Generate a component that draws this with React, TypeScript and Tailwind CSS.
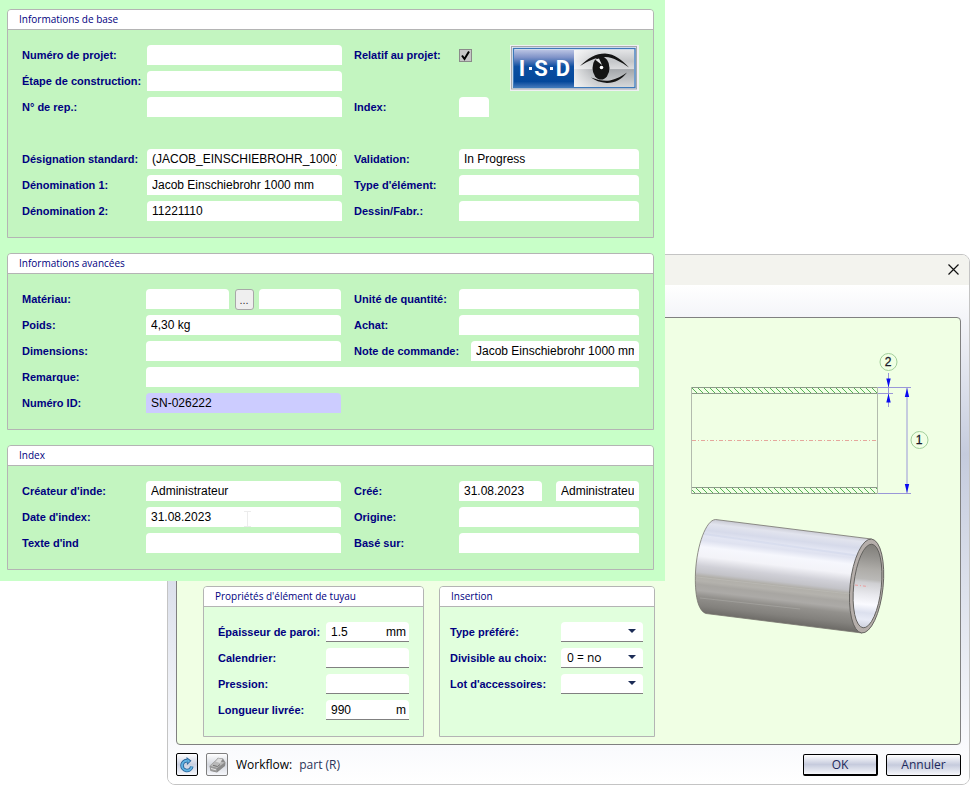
import type { ReactNode } from "react";
import clsx from "clsx";

const FIELD =
  "h-5 min-w-0 rounded-t-[4px] bg-white px-[5px] text-[12px] leading-5 text-black outline-none";
const LABEL =
  "shrink-0 text-[11px] font-bold leading-5 whitespace-nowrap text-[#000080]";

function GroupBox({
  title,
  className,
  children,
}: {
  title: string;
  className?: string;
  children: ReactNode;
}) {
  return (
    <section
      className={clsx("rounded-t-[4px] border border-[#b4b4b4]", className)}
    >
      <h2 className="h-5 rounded-t-[3px] border-b border-[#b4b4b4] bg-white pl-[11px] font-['Open_Sans',sans-serif] text-[10px] leading-[19px] text-[#000080]">
        {title}
      </h2>
      {children}
    </section>
  );
}

function Field({
  id,
  label,
  value = "",
  labelClass = "w-[124px]",
  fieldClass = "bg-white",
}: {
  id: string;
  label: string;
  value?: string;
  labelClass?: string;
  fieldClass?: string;
}) {
  return (
    <div className="flex h-5">
      <label htmlFor={id} className={clsx(LABEL, labelClass)}>
        {label}
      </label>
      <input
        id={id}
        type="text"
        defaultValue={value}
        className={clsx(FIELD, "flex-1", fieldClass)}
      />
    </div>
  );
}

function UnitField({
  id,
  label,
  value = "",
  unit,
}: {
  id: string;
  label: string;
  value?: string;
  unit?: string;
}) {
  return (
    <div className="flex h-5">
      <label htmlFor={id} className={clsx(LABEL, "w-[108px]")}>
        {label}
      </label>
      <div className="flex min-w-0 flex-1 rounded-t-[4px] border-b border-[#808080] bg-white pr-[3px] pl-[5px] text-[12px] leading-5">
        <input
          id={id}
          type="text"
          defaultValue={value}
          className="w-0 min-w-0 flex-1 bg-transparent text-black outline-none"
        />
        {unit && <span>{unit}</span>}
      </div>
    </div>
  );
}

function SelectField({
  id,
  label,
  options,
}: {
  id: string;
  label: string;
  options: string[];
}) {
  return (
    <div className="flex h-5">
      <label htmlFor={id} className={clsx(LABEL, "w-[111px]")}>
        {label}
      </label>
      <div className="relative min-w-0 flex-1">
        <select
          id={id}
          className="block h-5 w-full appearance-none rounded-t-[4px] border-b border-[#808080] bg-white pl-[6px] font-['Open_Sans',sans-serif] text-[12px] leading-[18px] text-black outline-none"
        >
          {options.map((option) => (
            <option key={option}>{option}</option>
          ))}
        </select>
        <svg
          aria-hidden="true"
          viewBox="0 0 8 4"
          className="pointer-events-none absolute top-[7px] right-[7px] h-1 w-2"
        >
          <path d="M0 0H8L4 4Z" fill="#1c2c56" />
        </svg>
      </div>
    </div>
  );
}

function Logo() {
  return (
    <svg
      role="img"
      aria-label="ISD"
      viewBox="0 0 129 46"
      className="ml-auto h-[46px] w-[129px] shrink-0"
    >
      <defs>
        <linearGradient id="logo-blue" x1="0" y1="0" x2="0" y2="1">
          <stop offset="0" stopColor="#b9c3e3" />
          <stop offset="0.2" stopColor="#7f93c8" />
          <stop offset="0.45" stopColor="#0c4ea0" />
          <stop offset="0.85" stopColor="#04489b" />
          <stop offset="1" stopColor="#3f74b8" />
        </linearGradient>
        <linearGradient id="logo-grey" x1="0" y1="0" x2="0" y2="1">
          <stop offset="0" stopColor="#e3e4e6" />
          <stop offset="0.3" stopColor="#c4c6c9" />
          <stop offset="0.5" stopColor="#d9dadc" />
          <stop offset="0.53" stopColor="#a4a7ab" />
          <stop offset="1" stopColor="#d5d7d9" />
        </linearGradient>
        <linearGradient id="logo-shine" x1="0" y1="0" x2="1" y2="0">
          <stop offset="0" stopColor="#ffffff" stopOpacity="0.7" />
          <stop offset="0.4" stopColor="#ffffff" stopOpacity="0" />
        </linearGradient>
      </defs>
      <rect width="129" height="46" fill="#efeff3" />
      <rect x="1.5" y="1.5" width="125" height="42.5" fill="#f1f2f6" stroke="#a6a8ac" />
      <rect x="3.5" y="3.5" width="121.5" height="39" fill="none" stroke="#3c79ba" strokeWidth="1.4" />
      <rect x="4" y="5" width="60" height="37" fill="url(#logo-blue)" />
      <rect x="64" y="5" width="60" height="37" fill="url(#logo-grey)" />
      <rect x="64" y="5" width="60" height="37" fill="url(#logo-shine)" />
      <g
        fill="#ffffff"
        fontFamily="Roboto, 'Liberation Sans', sans-serif"
        fontSize="22"
        fontWeight="700"
        textAnchor="middle"
      >
        <text x="12" y="31">I</text>
        <text x="31" y="31">S</text>
        <text x="53" y="31">D</text>
      </g>
      <rect x="19" y="22" width="3" height="3" fill="#fff" />
      <rect x="40" y="22" width="3" height="3" fill="#fff" />
      <path
        d="M70 21C78 13 86 8.500 95 8.500C105 9 112 15 119 22.500C111 17 104 12.500 95 12C86 12 78 16 70 21Z"
        fill="#141414"
      />
      <path
        d="M81 32.500C88 35 94 36.500 100 35.500C107 34 112 31 117 27.500C112 34 105 38 97 38C90 37.500 85 35.500 81 32.500Z"
        fill="#141414"
      />
      <ellipse cx="91" cy="23" rx="8.500" ry="11.500" fill="#141414" />
      <path d="M85 14.500L89 13.500L92 20Z" fill="#e8e8ea" />
      <circle cx="91.500" cy="22.500" r="1.800" fill="#fff" />
    </svg>
  );
}

function PipeDrawing() {
  return (
    <svg
      role="img"
      aria-label="1 2"
      viewBox="680 345 260 300"
      className="mt-[27px] ml-[10px] h-[300px] w-[260px] shrink-0 self-start"
    >
      <defs>
        <pattern id="hatch" width="6" height="6" patternUnits="userSpaceOnUse" x="692" y="388">
          <path d="M0 0L6 6" stroke="#55b455" strokeWidth="1" />
        </pattern>
        <linearGradient id="pipe-body" gradientUnits="userSpaceOnUse" x1="794" y1="529" x2="783" y2="623">
          <stop offset="0" stopColor="#c9cad3" />
          <stop offset="0.05" stopColor="#e2e4ee" />
          <stop offset="0.12" stopColor="#d6daea" />
          <stop offset="0.18" stopColor="#e3e6f3" />
          <stop offset="0.23" stopColor="#dfe2f0" />
          <stop offset="0.3" stopColor="#f6f7fd" />
          <stop offset="0.4" stopColor="#f3f3f8" />
          <stop offset="0.5" stopColor="#d0d0d7" />
          <stop offset="0.57" stopColor="#c3c3c8" />
          <stop offset="0.61" stopColor="#b1afa9" />
          <stop offset="0.66" stopColor="#b4b2ad" />
          <stop offset="0.7" stopColor="#a8a6a2" />
          <stop offset="0.76" stopColor="#acaaa7" />
          <stop offset="0.82" stopColor="#93918d" />
          <stop offset="0.92" stopColor="#83817d" />
          <stop offset="1" stopColor="#6e6c68" />
        </linearGradient>
        <linearGradient id="pipe-inside" x1="0" y1="0" x2="0" y2="1">
          <stop offset="0" stopColor="#807e79" />
          <stop offset="0.15" stopColor="#94928e" />
          <stop offset="0.3" stopColor="#aeaca8" />
          <stop offset="0.42" stopColor="#bab9b7" />
          <stop offset="0.46" stopColor="#cfcfd2" />
          <stop offset="0.6" stopColor="#e8e8ed" />
          <stop offset="0.72" stopColor="#fafaff" />
          <stop offset="0.82" stopColor="#dce0ee" />
          <stop offset="0.9" stopColor="#e8ebf6" />
          <stop offset="1" stopColor="#cdd0dc" />
        </linearGradient>
      </defs>

      {/* section view */}
      <rect x="692" y="387.500" width="186" height="6" fill="url(#hatch)" />
      <rect x="692" y="487.500" width="186" height="6" fill="url(#hatch)" />
      <g fill="none" stroke="#8d9b8a">
        <path d="M691.500 387.500H878M691.500 393.500H878M691.500 487.500H878M691.500 493.500H878" />
        <path d="M691.500 387V494M877.500 387V494" stroke="#b3bbae" />
      </g>
      <path
        d="M692 440.500H878"
        stroke="#e5a79c"
        strokeDasharray="4 2 1 2"
        fill="none"
      />

      {/* dimensions */}
      <path
        d="M878 387.500H911M878 393.500H893M878 493.500H911M888.500 373V407M907 388V493"
        stroke="#9a97d8"
        fill="none"
      />
      <path
        d="M886.300 378.500H890.700L888.500 387.500ZM886.300 402.500H890.700L888.500 393.500ZM904.800 397H909.200L907 388ZM904.800 484H909.200L907 493Z"
        fill="#0a0af0"
      />
      <g fill="#f0ffe4" stroke="#a2cf9b">
        <circle cx="888.500" cy="362" r="8.500" />
        <circle cx="919.500" cy="440" r="8.500" />
      </g>
      <g
        fill="#1a1a2a"
        stroke="#1a1a2a"
        strokeWidth="0.3"
        fontFamily="'Liberation Sans', sans-serif"
        fontSize="12"
        textAnchor="middle"
      >
        <text x="888" y="366">2</text>
        <text x="919" y="444">1</text>
      </g>

      {/* shaded pipe */}
      <path
        d="M715.500 519.500L871.500 539L862 633L706 613.500C698 611 694.500 595 695.500 572C697 545 706 520 715.500 519.500Z"
        fill="url(#pipe-body)"
        stroke="#77756f"
        strokeWidth="0.800"
      />
      <path d="M704 534L860 556" stroke="#cbd1e8" strokeOpacity="0.4" strokeWidth="2" />
      <path d="M697 577L850 594M700 598L800 609" stroke="#d0cfcc" strokeOpacity="0.25" />
      <ellipse
        cx="866.600"
        cy="586"
        rx="16.500"
        ry="47.200"
        transform="rotate(6 866.600 586)"
        fill="#b5aeaa"
        stroke="#5f5d5a"
        strokeWidth="0.900"
      />
      <ellipse
        cx="867.500"
        cy="586"
        rx="13.800"
        ry="42"
        transform="rotate(6 867.500 586)"
        fill="url(#pipe-inside)"
        stroke="#5f5d5a"
        strokeWidth="0.900"
      />
      <path d="M855 585L868 586.500" stroke="#ec9c9c" strokeDasharray="3 2 1 2" />
    </svg>
  );
}

const FOOTER_BUTTON =
  "h-[22px] w-[75px] rounded-[2px] border border-black bg-linear-to-b from-white via-[#c6cbdd] to-[#f6f7fb] text-[12px] leading-5 text-[#1d2a5c]";

function PartDialog() {
  return (
    <div className="mt-[254px] ml-[167px] overflow-hidden rounded-lg border border-[#c4c4c4] bg-white [grid-area:1/1]">
      <div className="flex h-[30px] items-center justify-end bg-[#f3f3ee] pr-[9px] pb-[2px]">
        <button type="button" aria-label="Fermer" className="p-[1px]">
          <svg viewBox="0 0 11 11" className="size-[11px]">
            <path d="M0.500 0.500L10.500 10.500M10.500 0.500L0.500 10.500" stroke="#111" strokeWidth="1.200" />
          </svg>
        </button>
      </div>
      <div className="bg-[linear-gradient(#ffffff_0%,#f3f4f8_7%,#c5cbdd_34%,#dde1ec_61%,#f8f9fc_91%,#ffffff_100%)] px-2 pt-8 pb-2">
        <div className="flex min-h-[428px] items-end gap-[15px] rounded-[4px] border border-[#808080] bg-[#f0ffe4] pb-[7px] pl-[26px]">
          <div className="flex items-stretch gap-[15px]">
            <GroupBox
              title="Propriétés d'élément de tuyau"
              className="w-[221px] bg-[#e1ffdd]"
            >
              <div className="flex flex-col gap-[6px] px-[14px] pt-[15px] pb-4">
                <UnitField id="wall" label="Épaisseur de paroi:" value="1.5" unit="mm" />
                <UnitField id="schedule" label="Calendrier:" />
                <UnitField id="pressure" label="Pression:" />
                <UnitField id="length" label="Longueur livrée:" value="990" unit="m" />
              </div>
            </GroupBox>
            <GroupBox title="Insertion" className="w-[216px] bg-[#e1ffdd]">
              <div className="flex flex-col gap-[6px] pt-[15px] pr-[11px] pb-4 pl-[10px]">
                <SelectField id="preferred" label="Type préféré:" options={[""]} />
                <SelectField id="divisible" label="Divisible au choix:" options={["0 = no"]} />
                <SelectField id="accessories" label="Lot d'accessoires:" options={[""]} />
              </div>
            </GroupBox>
          </div>
          <PipeDrawing />
        </div>
        <div className="flex items-center pt-2 font-['Open_Sans',sans-serif]">
          <button
            type="button"
            aria-label="Actualiser"
            className="grid h-[23px] w-[22px] place-items-center rounded-[2px] border border-black bg-linear-to-b from-white via-[#c9d0e0] to-[#f6f7fb]"
          >
            <svg viewBox="0 0 14 16" className="h-4 w-[14px]" fill="none">
              <path d="M7.500 3.700A4.900 4.900 0 1 0 11.800 9.500" stroke="#27639a" strokeWidth="3.600" />
              <path d="M6.500 0L11.500 3.800L7 8Z" fill="#27639a" />
              <path d="M7.500 3.700A4.900 4.900 0 1 0 11.800 9.500" stroke="#5fb2e2" strokeWidth="2" />
              <path d="M7.300 1.700L10.200 3.900L7.600 6.300Z" fill="#5fb2e2" />
            </svg>
          </button>
          <button
            type="button"
            aria-label="Imprimer"
            className="ml-2 grid h-[23px] w-[22px] place-items-center rounded-[2px] border border-[#808080] bg-linear-to-b from-white via-[#d5d8df] to-[#f6f7fb]"
          >
            <svg viewBox="0 0 17 16" className="h-4 w-[17px]">
              <path d="M0.500 9L7 3L9 0.800L14 1.500L16.500 5.500L16 9L8 15.500L1.500 14Z" fill="#8b8b8b" />
              <path d="M0.800 9L7 3.500L15.800 5.500L8 11Z" fill="#b9b9b9" />
              <path d="M6.500 4.500L9.300 1.300L13.500 2L11 6Z" fill="#dedede" />
              <path d="M0.800 9.500L8 11.300V15L1.800 13.500Z" fill="#9c9c9c" />
              <path d="M2 11.500L7 12.800" stroke="#e4e4e4" />
              <path d="M4 8.300L8.500 9.500L11 7.500" stroke="#727272" fill="none" />
            </svg>
          </button>
          <span className="ml-2 text-[12px] leading-5 text-black">Workflow:</span>
          <span className="ml-[7px] text-[12px] leading-5 text-[#2a3358]">part (R)</span>
          <button type="button" className={clsx(FOOTER_BUTTON, "ml-auto border-r-2 border-b-2")}>
            OK
          </button>
          <button type="button" className={clsx(FOOTER_BUTTON, "ml-2")}>
            Annuler
          </button>
        </div>
      </div>
    </div>
  );
}

const SHEET_BODY = "flex gap-[13px] px-[14px] pt-[15px] pb-4";
const COLUMN = "flex flex-col gap-[6px]";

function PartSheet() {
  return (
    <form className="flex w-[665px] flex-col gap-[15px] self-start bg-[#c8ffc8] pt-[9px] pr-[11px] pb-[11px] pl-[7px] [grid-area:1/1]">
      <GroupBox title="Informations de base" className="bg-[#c3f5c0]">
        <div className={SHEET_BODY}>
          <div className={clsx(COLUMN, "w-[320px]")}>
            <Field id="project" label="Numéro de projet:" labelClass="w-[125px]" />
            <Field id="stage" label="Étape de construction:" labelClass="w-[125px]" />
            <Field id="rep" label="N° de rep.:" labelClass="w-[125px]" />
            <div className="h-5" />
            <Field
              id="standard"
              label="Désignation standard:"
              labelClass="w-[125px]"
              value="(JACOB_EINSCHIEBROHR_1000)"
            />
            <Field
              id="name1"
              label="Dénomination 1:"
              labelClass="w-[125px]"
              value="Jacob Einschiebrohr 1000 mm"
            />
            <Field id="name2" label="Dénomination 2:" labelClass="w-[125px]" value="11221110" />
          </div>
          <div className={clsx(COLUMN, "-ml-px min-w-0 flex-1")}>
            <div className="flex h-[46px] items-start">
              <label htmlFor="project-related" className={clsx(LABEL, "w-[105px]")}>
                Relatif au projet:
              </label>
              <span className="relative mt-1 size-[13px]">
                <input
                  id="project-related"
                  type="checkbox"
                  defaultChecked
                  className="peer block size-[13px] appearance-none border border-[#8a8a8a] bg-[#c6c6c6]"
                />
                <svg
                  aria-hidden="true"
                  viewBox="0 0 13 13"
                  className="pointer-events-none invisible absolute inset-0 peer-checked:visible"
                >
                  <path d="M3 6.500L5.500 10L10 2.500" fill="none" stroke="#000" strokeWidth="2" />
                </svg>
              </span>
              <Logo />
            </div>
            <Field id="index" label="Index:" labelClass="w-[105px]" fieldClass="max-w-[30px]" />
            <div className="h-5" />
            <Field id="validation" label="Validation:" labelClass="w-[105px]" value="In Progress" />
            <Field id="type" label="Type d'élément:" labelClass="w-[105px]" />
            <Field id="drawing" label="Dessin/Fabr.:" labelClass="w-[105px]" />
          </div>
        </div>
      </GroupBox>

      <GroupBox title="Informations avancées" className="bg-[#c3f5c0]">
        <div className={clsx(COLUMN, "px-[14px] pt-[15px] pb-4")}>
          <div className="flex gap-[13px]">
            <div className={clsx(COLUMN, "w-[319px]")}>
              <div className="flex h-5">
                <label htmlFor="material" className={clsx(LABEL, "w-[124px]")}>
                  Matériau:
                </label>
                <input id="material" type="text" className={clsx(FIELD, "flex-1")} />
                <button
                  type="button"
                  aria-label="..."
                  className="mr-[5px] ml-[6px] h-[21px] w-[19px] rounded-[3px] border border-[#a8a8a8] bg-[#efefef] text-[11px] leading-5 text-[#333]"
                >
                  ...
                </button>
                <input type="text" aria-label="Matériau" className={clsx(FIELD, "flex-1")} />
              </div>
              <Field id="weight" label="Poids:" value="4,30 kg" />
              <Field id="dimensions" label="Dimensions:" />
            </div>
            <div className={clsx(COLUMN, "min-w-0 flex-1")}>
              <Field id="unit" label="Unité de quantité:" labelClass="w-[105px]" />
              <Field id="purchase" label="Achat:" labelClass="w-[105px]" />
              <Field
                id="order-note"
                label="Note de commande:"
                labelClass="w-[117px]"
                value="Jacob Einschiebrohr 1000 mm"
              />
            </div>
          </div>
          <Field id="remark" label="Remarque:" />
          <div className="w-[319px]">
            <Field id="ident" label="Numéro ID:" value="SN-026222" fieldClass="bg-[#ccccff]!" />
          </div>
        </div>
      </GroupBox>

      <GroupBox title="Index" className="bg-[#c3f5c0]">
        <div className={SHEET_BODY}>
          <div className={clsx(COLUMN, "w-[319px]")}>
            <Field id="creator" label="Créateur d'inde:" value="Administrateur" />
            <div className="relative">
              <Field id="index-date" label="Date d'index:" value="31.08.2023" />
              <svg
                aria-hidden="true"
                viewBox="0 0 7 16"
                className="pointer-events-none absolute top-[4px] left-[222px] h-4 w-[7px]"
              >
                <path d="M0 0.500H7M3.500 0.500V15.500M0 15.500H7" stroke="#ececec" />
              </svg>
            </div>
            <Field id="index-text" label="Texte d'ind" />
          </div>
          <div className={clsx(COLUMN, "min-w-0 flex-1")}>
            <div className="flex h-5">
              <label htmlFor="created" className={clsx(LABEL, "w-[105px]")}>
                Créé:
              </label>
              <input
                id="created"
                type="text"
                defaultValue="31.08.2023"
                className={clsx(FIELD, "mr-[14px] flex-1")}
              />
              <input
                type="text"
                aria-label="Créé"
                defaultValue="Administrateur"
                className={clsx(FIELD, "flex-1")}
              />
            </div>
            <Field id="origin" label="Origine:" labelClass="w-[105px]" />
            <Field id="based-on" label="Basé sur:" labelClass="w-[105px]" />
          </div>
        </div>
      </GroupBox>
    </form>
  );
}

export default function App() {
  return (
    <main className="grid min-h-screen grid-cols-1 content-start bg-white font-['Liberation_Sans',Arial,sans-serif]">
      <PartDialog />
      <PartSheet />
    </main>
  );
}
